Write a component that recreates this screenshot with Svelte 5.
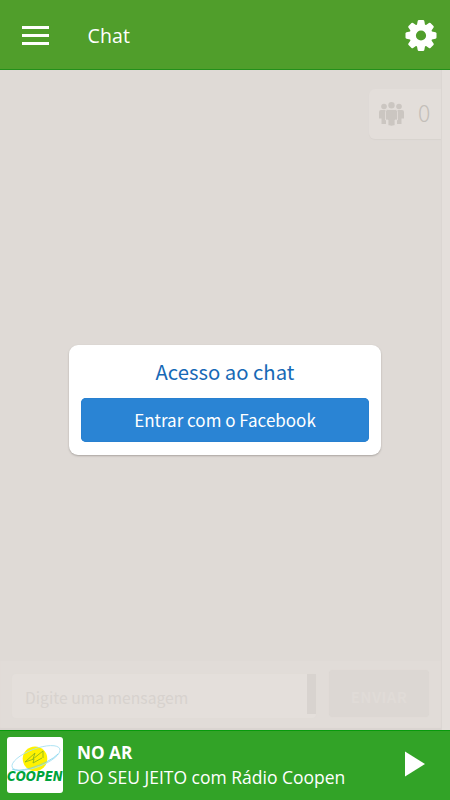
<script>
  let message = $state('');
  const online = 0;
  const teeth = [0, 45, 90, 135, 180, 225, 270, 315];
</script>

<div class="app">
  <header>
    <button class="icon menu" aria-label="Menu"><i></i><i></i><i></i></button>
    <h1>Chat</h1>
    <button class="icon gear" aria-label="Configurações">
      <svg viewBox="0 0 32 32" width="32" height="32" fill="#fff">
        {#each teeth as angle}
          <path d="M11.600 7 12.700 1Q12.900 0 13.900 0h4.200q1 0 1.200 1L20.400 7Z" transform="rotate({angle} 16 15.500)" />
        {/each}
        <circle cx="16" cy="15.500" r="8.300" fill="none" stroke="#fff" stroke-width="6.400" />
      </svg>
    </button>
  </header>

  <main>
    <section class="room">
      <div class="messages">
        <div class="people">
          <svg viewBox="0 0 25 24" width="25" height="24" fill="#cbc6c1">
            <circle cx="5" cy="4.500" r="2.800" /><circle cx="20" cy="4.500" r="2.800" />
            <path d="M2 8h5v14H2.500v-5.500H0V10q0-2 2-2ZM18 8h5q2 0 2 2v6.500h-2.500V22H18Z" />
            <circle cx="12.500" cy="3.200" r="3.200" />
            <path d="M8.500 7.500h8q2 0 2 2V18h-2.500v5.500q-3.500 1.200-7 0V18H6.500V9.500q0-2 2-2Z" stroke="#e3deda" stroke-width=".8" />
          </svg>
          <span>{online}</span>
        </div>
      </div>
      <form class="composer">
        <div class="field">
          <input placeholder="Digite uma mensagem" bind:value={message} />
          <b></b>
        </div>
        <button type="button">ENVIAR</button>
      </form>
    </section>
    <div class="gutter"></div>
    <div class="overlay">
      <div class="dialog">
        <h2>Acesso ao chat</h2>
        <button>Entrar com o Facebook</button>
      </div>
    </div>
  </main>

  <footer>
    <div class="logo">
      <svg viewBox="0 0 56 56" width="56" height="56">
        <ellipse cx="28" cy="21.800" rx="12.300" ry="12.300" fill="#fff200" />
        <ellipse cx="29" cy="21" rx="25.500" ry="9" transform="rotate(-21 29 21)" fill="none" stroke="#a5dff2" stroke-width=".8" />
        <path d="M5 32q5 3 19-1 19-6 27-14" fill="none" stroke="#6ccbe9" stroke-width=".7" />
        <path d="m18 25 10-9-2 6 10-8v7M18 25l9-3-1 4 9-5" fill="none" stroke="#8fb81c" stroke-width=".9" />
      </svg>
      <em>COOPEN</em>
    </div>
    <div class="track">
      <strong>NO AR</strong>
      <span>DO SEU JEITO com Rádio Coopen</span>
    </div>
    <button class="icon play" aria-label="Tocar">
      <svg viewBox="0 0 20 26" width="20" height="26"><path d="M0 .5 20 13 0 25.500Z" fill="#fff" /></svg>
    </button>
  </footer>
</div>

<style>
  .app { width: 450px; height: 800px; display: flex; flex-direction: column; overflow: hidden; background: #dfdad6; font-family: "Open Sans", sans-serif; }
  h1, h2 { margin: 0; font-weight: 400; }
  button { border: 0; padding: 0; font: inherit; }
  .icon { background: none; display: flex; flex: none; }
  .gear svg { overflow: visible; }
  header { box-sizing: border-box; height: 70px; flex: none; display: flex; align-items: center; background: #509e2b; border-bottom: 1px solid #23901a; padding: 2px 13px 0 21.500px; color: #fff; }
  .menu { width: 27.500px; flex-direction: column; gap: 4.800px; }
  .menu i { height: 3px; background: #fff; }
  h1 { font-size: 19.500px; line-height: 28px; margin-left: 38.500px; flex: 1; letter-spacing: .1px; }
  main { flex: 1; min-height: 0; display: flex; position: relative; font-family: "Noto Sans CJK SC", sans-serif; }
  .room { width: 441px; display: flex; flex-direction: column; }
  .messages { flex: 1; display: flex; justify-content: flex-end; align-items: flex-start; padding-top: 19px; }
  .people { box-sizing: border-box; width: 72px; height: 50px; border-radius: 6px 0 0 6px; background: #e3deda; box-shadow: 0 1px 1px #d8d3cf; display: flex; align-items: center; padding: 0 0 0 10px; gap: 14px; color: #c3beb9; font-size: 23px; line-height: 30px; font-weight: 300; }
  .people span { padding-bottom: 4px; }
  .gutter { width: 8px; border-left: 1px solid #dbd6d2; background: #e4dfdb; }
  .composer { box-sizing: border-box; height: 69px; background: #e1dcd8; box-shadow: inset 0 -2px 1px #dad4d1; display: flex; align-items: flex-start; padding: 9px 12px 0 12px; }
  .field { display: flex; width: 304px; height: 44px; margin-top: 4px; border-radius: 4px; background: #e4dfdb; box-shadow: 0 0 1px #ded9d5; }
  input { box-sizing: border-box; width: 295px; border: 0; outline: 0; padding: 2px 0 0 13px; background: transparent; font: 15.700px "Noto Sans CJK SC", sans-serif; color: #aaa; }
  input::placeholder { color: #d7d2ce; opacity: 1; }
  .field b { width: 9px; height: 40px; background: #d8d3cf; }
  .composer button { width: 100px; height: 47px; margin-left: 13px; padding-top: 5px; border-radius: 4px; background: #dcd7d3; color: #e0dbd7; font-size: 15px; font-weight: 700; letter-spacing: .3px; box-shadow: 0 0 1px #dad5d1; }
  .overlay { position: absolute; inset: 0 0 1px; display: flex; align-items: center; justify-content: center; }
  .dialog { box-sizing: border-box; width: 312px; height: 110px; background: #fff; border-radius: 9px; box-shadow: 0 1px 2px #aaa5a1; padding: 11.500px 12px 12px; display: flex; flex-direction: column; text-align: center; }
  h2 { font-size: 20.300px; line-height: 30px; color: #1769b6; }
  .dialog button { height: 44px; margin-top: 12px; padding-bottom: 1px; background: #2a84d4; color: #fff; border-radius: 5px; font-size: 17px; line-height: 24px; box-shadow: inset 0 0 0 1px #2880d0; }
  footer { box-sizing: border-box; height: 70px; flex: none; display: flex; align-items: center; background: #32a327; border-top: 1px solid #079a0c; padding: 0 25px 2px 7px; color: #fff; }
  .logo { width: 56px; height: 56px; border-radius: 3px; background: #fff; display: grid; }
  .logo svg, .logo em { grid-area: 1 / 1; }
  .logo em { align-self: start; justify-self: start; padding-top: 31px; font: italic 700 13.700px/16px "DejaVu Sans", sans-serif; transform: scaleX(.87); transform-origin: left; color: #00a43d; }
  .track { flex: 1; margin-left: 14px; display: flex; flex-direction: column; font-size: 17.500px; line-height: 24px; white-space: nowrap; }
  .track strong { font-size: 17.200px; }
  .play { padding-bottom: 2px; }
</style>
